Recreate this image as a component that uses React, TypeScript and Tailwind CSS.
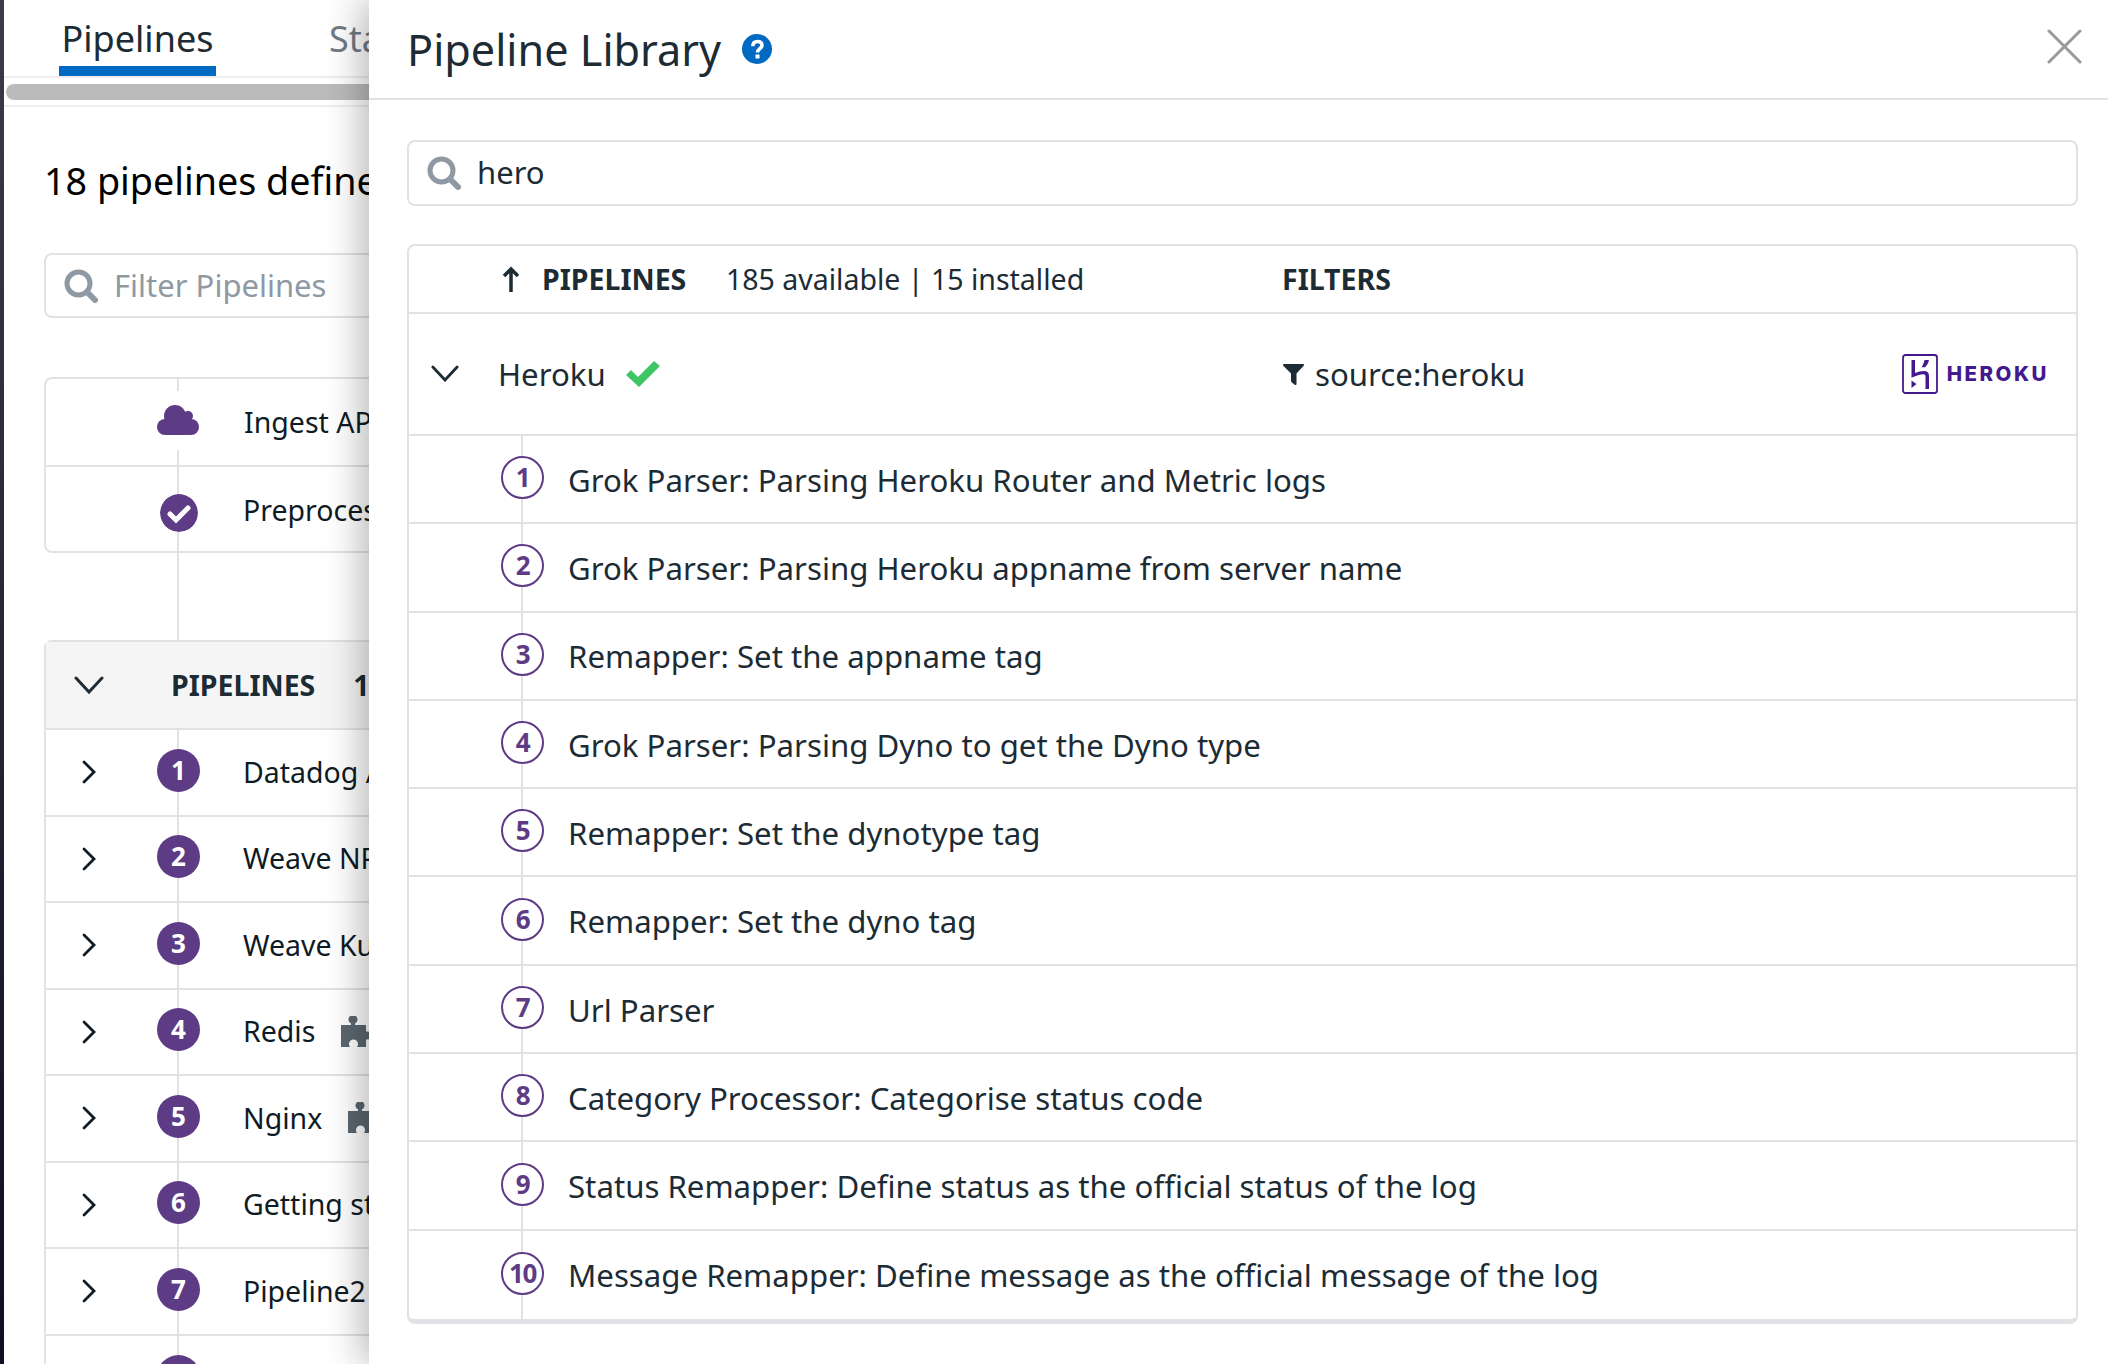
const pipelines = [
  { name: "Datadog Agent", n: 1 },
  { name: "Weave NPC", n: 2 },
  { name: "Weave Kube", n: 3 },
  { name: "Redis", n: 4, plugin: true },
  { name: "Nginx", n: 5, plugin: true },
  { name: "Getting started", n: 6 },
  { name: "Pipeline2", n: 7 },
];

const processors = [
  "Grok Parser: Parsing Heroku Router and Metric logs",
  "Grok Parser: Parsing Heroku appname from server name",
  "Remapper: Set the appname tag",
  "Grok Parser: Parsing Dyno to get the Dyno type",
  "Remapper: Set the dynotype tag",
  "Remapper: Set the dyno tag",
  "Url Parser",
  "Category Processor: Categorise status code",
  "Status Remapper: Define status as the official status of the log",
  "Message Remapper: Define message as the official message of the log",
];

function SearchIcon() {
  return (
    <svg viewBox="0 0 34 34" className="w-[34px] h-[34px] shrink-0" fill="none" stroke="#8f99a3">
      <circle cx="14.500" cy="14.500" r="11.500" strokeWidth="5" />
      <path d="M24 24l7 7" strokeWidth="6" strokeLinecap="round" />
    </svg>
  );
}

function ChevronDownIcon({ className }: { className: string }) {
  return (
    <svg viewBox="0 0 30 18" className={className} fill="none" stroke="#1c2b34" strokeWidth="3" strokeLinecap="round">
      <path d="M2 2l13 14L28 2" />
    </svg>
  );
}

function ChevronRightIcon() {
  return (
    <svg viewBox="0 0 14 24" className="w-[14px] h-[24px] shrink-0" fill="none" stroke="#0f1b24" strokeWidth="2.800" strokeLinecap="round">
      <path d="M2 2l10 10L2 22" />
    </svg>
  );
}

function PuzzleIcon() {
  return (
    <svg viewBox="0 0 30 32" className="w-[30px] h-[32px] shrink-0" fill="#5b6770">
      <path d="M0 9H10V7.500A4.500 4.500 0 1 1 14 7.500V9H25V15.500H26A4 4 0 0 1 26 23.500H25V31H16C17 29.500 17 28.500 17 28A4.500 4.500 0 0 0 8 28C8 28.500 8 29.500 9 31H0Z" />
    </svg>
  );
}

function HerokuLogo() {
  return (
    <div className="flex items-center gap-[9px]">
      <svg viewBox="0 0 36 40" className="w-[36px] h-[40px]">
        <rect x="1" y="1" width="34" height="38" rx="2.500" fill="none" stroke="#43198f" strokeWidth="1.800" />
        <path
          fill="#43198f"
          d="M9.500 6h3.500v13c3-1.300 6-2 9-2 3.200 0 5 1.700 5 5v13h-3.500V22.500c0-1.600-.7-2.300-2-2.300-3 0-8.200 1.800-12 3.500zM20 6h7c-.5 2.800-2 5.300-4 7.300h-3.500c1.500-2 2.500-4.700 3-7.300h-2.500zM9.500 26.500l5 3.500-5 4z"
        />
      </svg>
      <span className="text-[#43198f] text-[20.500px] leading-none font-extrabold tracking-[2.500px] [font-family:Inter,sans-serif]">
        HEROKU
      </span>
    </div>
  );
}

function LeftPage() {
  return (
    <div className="flex-1 min-w-0 bg-white text-[#0f1b24]">
      <div className="h-[76px] flex items-end pl-[55px] gap-[113px] text-[36px]">
        <div className="h-[76px] w-[157px] border-b-[10px] border-[#0069c2] text-center text-[#1c2b34] leading-[78px]">
          Pipelines
        </div>
        <div className="h-[76px] text-[#6e7a85] leading-[78px]">Status</div>
      </div>
      <div className="h-[31px] bg-white border-y-2 border-[#eeeef0] py-[6px] pl-[2px]">
        <div className="h-[16px] rounded-full bg-[#bbbbbb]" />
      </div>

      <div className="pl-[40px] pr-[20px]">
        <div className="mt-[48px] text-[37.700px] leading-[52px] text-black whitespace-nowrap">
          18 pipelines defined
        </div>
        <div className="mt-[46px] h-[65px] rounded-lg border-2 border-[#e2e2e6] flex items-center pl-[18px] gap-[16px] text-[31px] text-[#8f99a3]">
          <SearchIcon />
          <span className="whitespace-nowrap">Filter Pipelines</span>
        </div>

        <div className="mt-[59px] rounded-lg border-2 border-[#e2e2e6] text-[28.500px]">
          <div className="relative h-[88px] border-b-2 border-[#e2e2e6] flex items-center pl-[111px] gap-[45px]">
            <div className="absolute left-[131px] top-0 bottom-0 w-[2px] bg-[#e2e2e6]" />
            <div className="relative bg-white py-[14px] mb-[3px]">
              <svg viewBox="0 0 42 31" className="w-[42px] h-[31px]" fill="#5e3b85">
                <circle cx="18" cy="11" r="11" />
                <circle cx="31" cy="11" r="5" />
                <circle cx="8" cy="22" r="8" />
                <circle cx="34" cy="22" r="8" />
                <rect x="8" y="14" width="26" height="16" rx="2" />
              </svg>
            </div>
            <span className="whitespace-nowrap">Ingest API</span>
          </div>
          <div className="relative h-[84px] pt-[2px] flex items-center pl-[114px] gap-[45px]">
            <div className="absolute left-[131px] top-0 bottom-0 w-[2px] bg-[#e2e2e6]" />
            <svg viewBox="0 0 38 38" className="relative mt-[6px] w-[38px] h-[38px] bg-white rounded-full">
              <circle cx="19" cy="19" r="19" fill="#5e3b85" />
              <path d="M10 20l6 6 12-12" fill="none" stroke="#fff" strokeWidth="5" strokeLinecap="round" />
            </svg>
            <span className="whitespace-nowrap">Preprocessing</span>
          </div>
        </div>
        <div className="ml-[133px] w-[2px] h-[87px] bg-[#e2e2e6]" />

        <div className="rounded-t-lg border-2 border-[#e2e2e6] border-b-0 text-[28.500px]">
          <div className="h-[88px] bg-[#f5f5f6] border-b-2 border-[#e2e2e6] flex items-center pl-[28px] text-[#1c2b34]">
            <ChevronDownIcon className="w-[30px] h-[18px] shrink-0" />
            <span className="ml-[67px] font-bold">PIPELINES</span>
            <span className="ml-[38px] font-bold">18</span>
          </div>
          {pipelines.map((p) => (
            <div key={p.n} className="relative h-[86.500px] border-b-2 border-[#e2e2e6] flex items-center pl-[36px]">
              <div className="absolute left-[131px] top-0 bottom-0 w-[2px] bg-[#e2e2e6]" />
              <ChevronRightIcon />
              <div className="relative ml-[61px] mb-[4px] w-[43px] h-[43px] rounded-full bg-[#5e3b85] text-white font-bold text-[26px] flex items-center justify-center shrink-0">
                {p.n}
              </div>
              <span className="ml-[43px] whitespace-nowrap">{p.name}</span>
              {p.plugin && (
                <span className="ml-[26px]">
                  <PuzzleIcon />
                </span>
              )}
            </div>
          ))}
          {/* next row only peeks in at the bottom of the window */}
          <div className="relative h-[86.500px] pl-[111px] pt-[19px]">
            <div className="absolute left-[131px] top-0 bottom-0 w-[2px] bg-[#e2e2e6]" />
            <div className="relative w-[43px] h-[43px] rounded-full bg-[#5e3b85]" />
          </div>
        </div>
      </div>
    </div>
  );
}

function PipelineLibrary() {
  return (
    <div className="absolute top-0 bottom-0 right-0 w-[1739px] bg-white text-[#1c2b34] shadow-[-6px_0_36px_rgba(0,0,0,0.3)]">
      <div className="h-[100px] border-b-2 border-[#e2e2e6] flex items-center pl-[38px] pr-[26px]">
        <span className="text-[43.200px] leading-none mt-[2px]">Pipeline Library</span>
        <svg viewBox="0 0 30 30" className="ml-[21px] w-[30px] h-[30px]">
          <circle cx="15" cy="15" r="15" fill="#0069c2" />
          <path d="M10.800 12.200C10.800 9 12.500 7.500 15.500 7.500C18.500 7.500 20 9.200 20 11.500C20 14.500 15.500 15 15.500 18.500" fill="none" stroke="#fff" strokeWidth="3.600" />
          <rect x="13.500" y="20.500" width="4" height="4" fill="#fff" />
        </svg>
        <svg viewBox="0 0 35 35" className="ml-auto mb-[5px] w-[35px] h-[35px]" fill="none" stroke="#959a9e" strokeWidth="3" strokeLinecap="round">
          <path d="M2 2l31 31M33 2L2 33" />
        </svg>
      </div>

      <div className="pl-[38px] pr-[30px] pt-[40px]">
        <div className="h-[66px] rounded-lg border-2 border-[#e2e2e6] flex items-center pl-[18px] gap-[16px] text-[31px]">
          <SearchIcon />
          <span className="mb-[2px]">hero</span>
        </div>

        <div className="mt-[38px] rounded-lg border-2 border-b-[5px] border-[#e2e2e6]">
          <div className="h-[68px] border-b-2 border-[#e2e2e6] flex items-center text-[28.500px]">
            <div className="w-[873px] flex items-center shrink-0">
              <svg viewBox="0 0 18 26" className="ml-[93px] w-[18px] h-[26px] shrink-0" fill="none" stroke="#1c2b34" strokeWidth="3.500">
                <path d="M9 26V3M2 10l7-7 7 7" />
              </svg>
              <span className="ml-[22px] font-bold w-[184px]">PIPELINES</span>
              <span>185 available | 15 installed</span>
            </div>
            <span className="font-bold">FILTERS</span>
          </div>

          <div className="h-[122px] border-b-2 border-[#e2e2e6] flex items-center text-[31.200px] pr-[27px]">
            <div className="w-[873px] flex items-center shrink-0">
              <ChevronDownIcon className="ml-[22px] w-[28px] h-[17px] shrink-0" />
              <span className="ml-[39px]">Heroku</span>
              <svg viewBox="0 0 34 26" className="ml-[20px] w-[34px] h-[26px] shrink-0" fill="#3ec664">
                <path d="M0 14l5-5 7 7L28 0l6 5-21 21z" />
              </svg>
            </div>
            <svg viewBox="0 0 21 21" className="ml-[1px] w-[21px] h-[21px] shrink-0" fill="#1c2b34">
              <path d="M1 0h19c1 0 1.300 1 .7 1.700L13.500 9.500V20c0 1-1 1.300-1.800.8l-3-2.500c-.5-.4-.7-.8-.7-1.300V9.500L.3 1.700C-.3 1 0 0 1 0z" />
            </svg>
            <span className="ml-[11px]">source:heroku</span>
            <div className="ml-auto">
              <HerokuLogo />
            </div>
          </div>

          {processors.map((name, i) => (
            <div key={name} className="relative h-[88.300px] pt-[2px] border-b-2 last:border-b-0 border-[#e2e2e6] flex items-center pl-[92px] text-[31.200px]">
              <div className="absolute left-[112px] top-0 bottom-0 w-[2px] bg-[#e2e2e6]" />
              <div className="relative mb-[5px] w-[43px] h-[43px] rounded-full border-2 border-[#5e3b85] bg-white text-[#5e3b85] font-bold text-[26px] tracking-tighter flex items-center justify-center shrink-0">
                {i + 1}
              </div>
              <span className="ml-[24px] whitespace-nowrap">{name}</span>
            </div>
          ))}
        </div>
      </div>
    </div>
  );
}

export default function App() {
  return (
    <div className="relative w-[2108px] h-[1364px] overflow-hidden flex bg-white [font-family:'Noto_Sans',sans-serif]">
      <div className="w-[4px] shrink-0 bg-linear-to-b from-[#3f3a47] to-[#140c22]" />
      <LeftPage />
      <PipelineLibrary />
    </div>
  );
}
